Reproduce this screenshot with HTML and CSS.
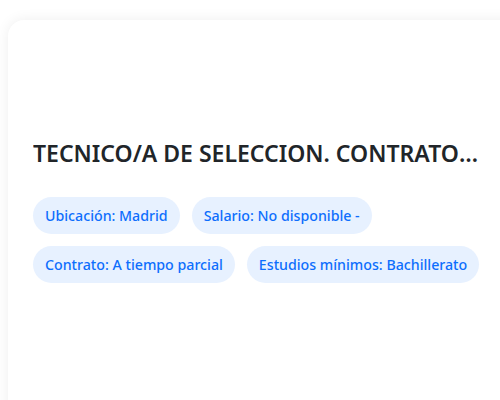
FILE: index.html
```html
<!DOCTYPE html>
<html lang="es">
<head>
  <meta charset="UTF-8" />
  <meta name="viewport" content="width=device-width, initial-scale=1" />
  <title>Oferta</title>
  <link rel="stylesheet" href="styles.css">
</head>
<body>
  <div class="page">
    <div class="card">
      <h2 class="title">TECNICO/A DE SELECCION. CONTRATO PARCIAL EN MADRID</h2>
      <div class="tags">
        <span class="tag">Ubicación: Madrid</span>
        <span class="tag">Salario: No disponible -</span>
        <span class="tag">Contrato: A tiempo parcial</span>
        <span class="tag">Estudios mínimos: Bachillerato</span>
      </div>
    </div>
  </div>
</body>
</html>
```

FILE: styles.css
```css
* {
  box-sizing: border-box;
}

body {
  margin: 0;
  background: #fff;
  font-family: 'Noto Sans', 'Open Sans', sans-serif;
}

.page {
  width: 500px;
  height: 400px;
  overflow: hidden;
  padding: 20px 0 0 8px;
}

.card {
  background: #fff;
  border-radius: 16px;
  box-shadow: 0 0 14px rgba(0, 0, 0, 0.07);
  width: 530px;
  height: 420px;
  padding: 117px 0 0 25px;
}

.title {
  margin: 0 0 27px 0;
  width: 450px;
  font-size: 23px;
  line-height: 33px;
  font-weight: 600;
  color: #212529;
  white-space: nowrap;
  overflow: hidden;
  text-overflow: ellipsis;
}

.tags {
  display: flex;
  flex-wrap: wrap;
  gap: 12px;
  width: 460px;
}

.tag {
  background: #e7f1ff;
  color: #0d6efd;
  font-size: 14.2px;
  font-weight: 500;
  padding: 8px 12px;
  border-radius: 20px;
  line-height: 21px;
}
```
